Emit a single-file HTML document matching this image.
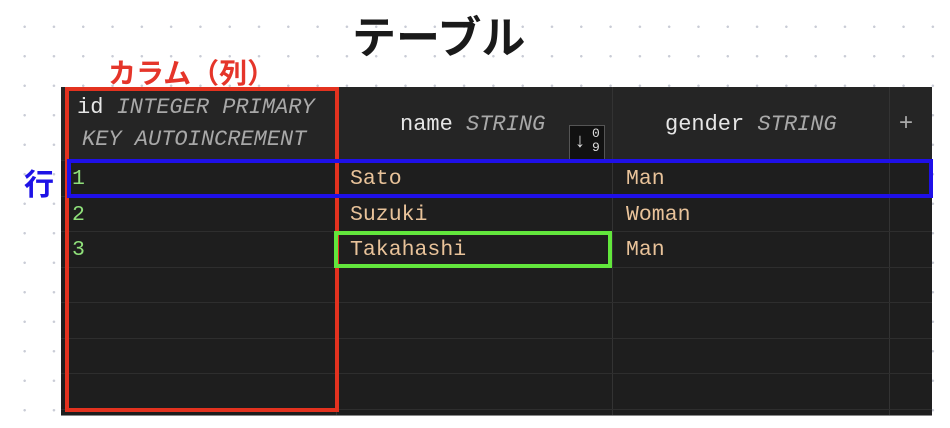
<!DOCTYPE html>
<html><head><meta charset="utf-8"><style>
body{margin:0;width:950px;height:428px;overflow:hidden;position:relative;background:#fff;
background-image:radial-gradient(#c9ccd6 1.1px,transparent 1.3px);background-size:29.3px 29.5px;background-position:10px 12px;font-family:"Liberation Mono",monospace}
.a{position:absolute}
.t{font-family:"Liberation Sans","Noto Sans CJK JP",sans-serif;font-weight:bold;white-space:nowrap}
#tbl{left:61px;top:87px;width:871px;height:328px;background:#1e1e1e;border-bottom:1px solid #888}
.hd{left:0;top:0;width:871px;height:73px;background:#252525}
.vl{width:1px;background:#333;top:0;height:328px}
.hl{height:1px;background:#2e2e2e;left:0;width:871px}
.c{font-size:21.5px;color:#e9c39a;line-height:1}
.g{color:#8fe07a}
.h{font-size:22px;color:#e6e6e6;line-height:1;white-space:nowrap}
.h i{color:#a8a8a8}
</style></head><body>
<div class="a t" style="left:352px;top:2px;font-size:44px;color:#1a1a1a">テーブル</div>
<div class="a t" style="left:108px;top:52px;font-size:28px;color:#e5352a">カラム（列）</div>
<div class="a t" style="left:24px;top:160px;font-size:30px;color:#1e12e6">行</div>
<div class="a t" style="left:440px;top:268px;font-size:27px;color:#5fe63a">セル</div>
<div id="tbl" class="a">
<div class="a hd"></div>
<div class="a vl" style="left:275px"></div>
<div class="a vl" style="left:551px"></div>
<div class="a vl" style="left:828px"></div>
<div class="a hl" style="top:73px"></div>
<div class="a hl" style="top:109px"></div>
<div class="a hl" style="top:144px"></div>
<div class="a hl" style="top:180px"></div>
<div class="a hl" style="top:215px"></div>
<div class="a hl" style="top:251px"></div>
<div class="a hl" style="top:286px"></div>
<div class="a hl" style="top:322px"></div>
<div class="a h" style="left:16px;top:10px">id <i>INTEGER PRIMARY</i></div>
<div class="a h" style="left:21px;top:42px"><i>KEY AUTOINCREMENT</i></div>
<div class="a h" style="left:339px;top:27px">name <i>STRING</i></div>
<div class="a h" style="left:604px;top:27px">gender <i>STRING</i></div>
<div class="a" style="left:838px;top:22px;color:#aaa;font-size:24px;font-family:'Liberation Sans',sans-serif">+</div>
<div class="a" style="left:508px;top:38px;width:36px;height:35px;background:#111;border:1px solid #555;box-sizing:border-box;color:#ddd">
<span class="a" style="left:4px;top:5px;font-size:20px">↓</span>
<span class="a" style="left:22px;top:1px;font-size:13px;line-height:14px">0<br>9</span></div>
<div class="a c g" style="left:11px;top:82px">1</div>
<div class="a c g" style="left:11px;top:118px">2</div>
<div class="a c g" style="left:11px;top:153px">3</div>
<div class="a c" style="left:289px;top:82px">Sato</div>
<div class="a c" style="left:289px;top:118px">Suzuki</div>
<div class="a c" style="left:289px;top:153px">Takahashi</div>
<div class="a c" style="left:565px;top:82px">Man</div>
<div class="a c" style="left:565px;top:118px">Woman</div>
<div class="a c" style="left:565px;top:153px">Man</div>
</div>
<div class="a" style="left:65px;top:87px;width:274px;height:325px;border:4px solid #e3321f;box-sizing:border-box"></div>
<div class="a" style="left:67px;top:159px;width:866px;height:39px;border:4px solid #1f10e8;box-sizing:border-box"></div>
<div class="a" style="left:334px;top:231px;width:278px;height:37px;border:4px solid #62e63c;box-sizing:border-box"></div>
</body></html>
